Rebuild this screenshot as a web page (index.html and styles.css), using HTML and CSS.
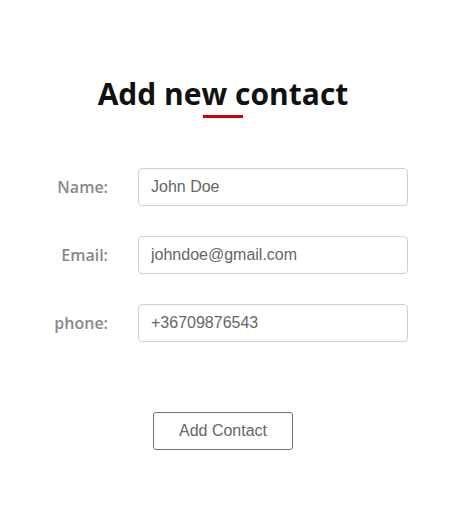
FILE: index.html
```html
<!DOCTYPE html>
<html>
<head>
<meta charset="utf-8">
<link rel="stylesheet" href="styles.css">
</head>
<body>
<main class="page">
  <h1 class="title">Add new contact</h1>
  <form class="form">
    <label class="label" for="name">Name:</label>
    <input class="field" id="name" type="text" value="John Doe">
    <label class="label" for="email">Email:</label>
    <input class="field" id="email" type="text" value="johndoe@gmail.com">
    <label class="label" for="phone">phone:</label>
    <input class="field" id="phone" type="text" value="+36709876543">
  </form>
  <div class="actions">
    <button class="btn" type="button">Add Contact</button>
  </div>
</main>
</body>
</html>
```
FILE: styles.css
```css
html, body {
  margin: 0;
  padding: 0;
  background: #fff;
}
.page {
  width: 430px;
  margin-left: 8px;
  padding-top: 73px;
  display: flex;
  flex-direction: column;
}
.title {
  margin: 0;
  font-family: "Open Sans", sans-serif;
  font-weight: 700;
  font-size: 30px;
  line-height: 41px;
  color: #111;
  text-align: center;
  display: flex;
  flex-direction: column;
  align-items: center;
}
.title::after {
  content: "";
  display: block;
  width: 40px;
  height: 3px;
  margin-top: 1px;
  background: #d60000;
}
.form {
  margin-top: 50px;
  display: grid;
  grid-template-columns: 100px 270px;
  column-gap: 30px;
  row-gap: 30px;
  align-items: center;
}
.label {
  text-align: right;
  font-family: "Open Sans", sans-serif;
  font-weight: 600;
  font-size: 16px;
  color: #888;
}
.field {
  box-sizing: border-box;
  width: 270px;
  height: 38px;
  margin: 0;
  padding: 0 12px;
  border: 1px solid #ccd0d6;
  border-radius: 4px;
  font-family: "Liberation Sans", Arial, sans-serif;
  font-size: 16px;
  color: #666;
  outline: none;
}
.actions {
  margin-top: 70px;
  display: flex;
  justify-content: center;
}
.btn {
  box-sizing: border-box;
  width: 140px;
  height: 38px;
  background: #fff;
  border: 1px solid #6c7079;
  border-radius: 3px;
  font-family: "Liberation Sans", Arial, sans-serif;
  font-size: 16px;
  color: #666;
  padding: 0;
}
```
